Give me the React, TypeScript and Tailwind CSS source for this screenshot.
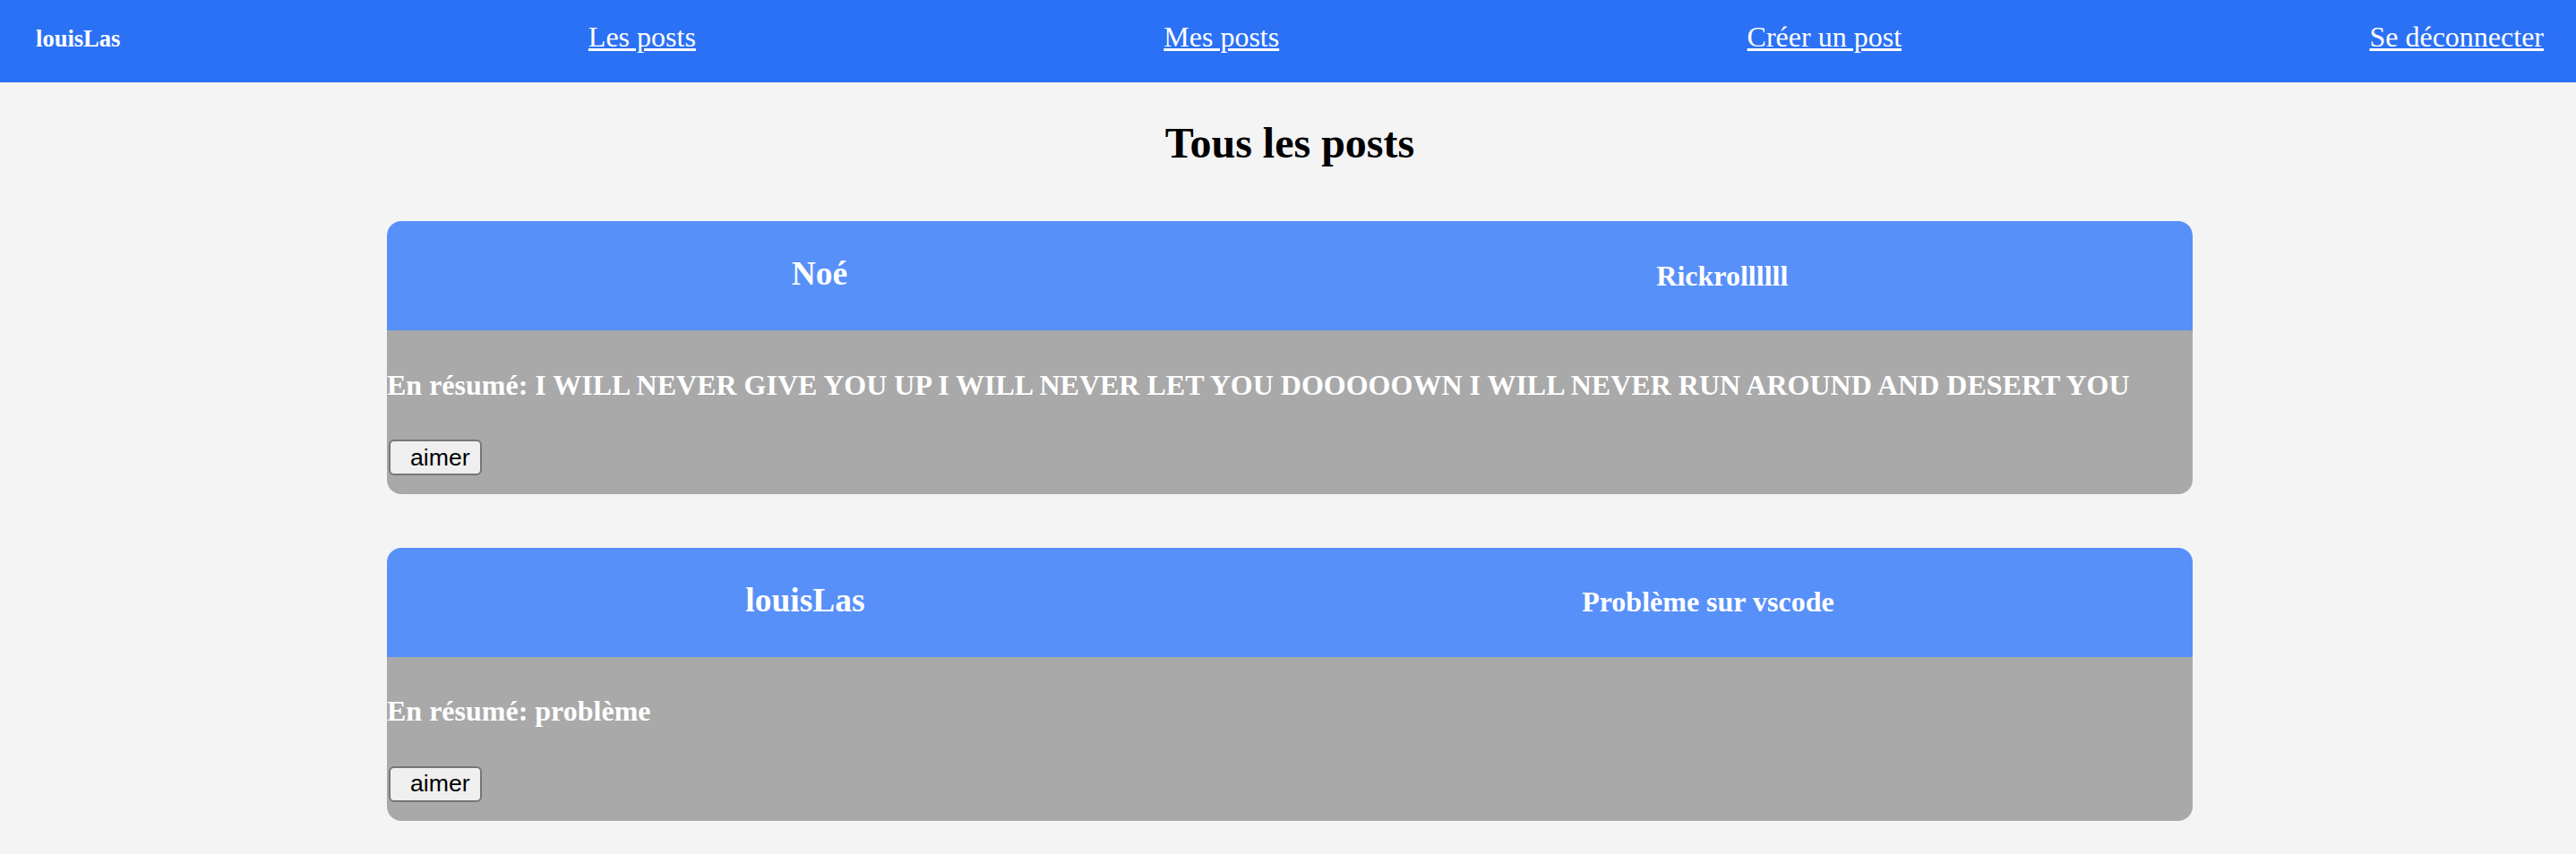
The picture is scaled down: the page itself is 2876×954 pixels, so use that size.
import React from "react";

const serif = "font-['Liberation_Serif','Times_New_Roman',serif]";

function Post({ author, title, summary }: { author: string; title: string; summary: string }) {
  return (
    <div className="mx-auto mt-[60px] w-[2016px] overflow-hidden rounded-[16px]">
      <div className="flex h-[122px] items-start justify-around bg-[#5890f9] text-white">
        <h3 className="mt-[37.44px] text-[37.44px] font-bold leading-[1.15]">{author}</h3>
        <h4 className="mt-[42.56px] text-[32px] font-bold leading-[1.15]">{title}</h4>
      </div>
      <div className="flex flex-col items-start bg-[#a9a9a9] pb-[21px]">
        <h4 className="my-[42.56px] text-[32px] font-bold leading-[1.15] text-white">
          En résumé: {summary}
        </h4>
        <button className="ml-[2px] flex h-[40px] w-[104px] items-center rounded-[6px] border-2 border-[#767676] bg-[#efefef] pl-[22px] font-['Liberation_Sans',Arial,sans-serif] text-[26.67px] leading-none text-black">
          aimer
        </button>
      </div>
    </div>
  );
}

export default function App() {
  return (
    <div className={`h-screen w-full overflow-hidden bg-[#f4f4f4] ${serif}`}>
      <div className="w-[2880px]">
        <nav className="flex h-[92px] items-baseline justify-between bg-[#2b71f5] pl-[40px] pr-[40px] pt-[23px] text-white">
          <span className="text-[26.56px] font-bold leading-[1.15]">louisLas</span>
          <a href="#" className="text-[32px] leading-[1.15] underline">Les posts</a>
          <a href="#" className="text-[32px] leading-[1.15] underline">Mes posts</a>
          <a href="#" className="text-[32px] leading-[1.15] underline">Créer un post</a>
          <a href="#" className="text-[32px] leading-[1.15] underline">Se déconnecter</a>
        </nav>
        <h2 className="mt-[39.84px] text-center text-[48px] font-bold leading-[1.15] text-black">Tous les posts</h2>
        <Post
          author="Noé"
          title="Rickrollllll"
          summary="I WILL NEVER GIVE YOU UP I WILL NEVER LET YOU DOOOOOWN I WILL NEVER RUN AROUND AND DESERT YOU"
        />
        <Post author="louisLas" title="Problème sur vscode" summary="problème" />
      </div>
    </div>
  );
}
